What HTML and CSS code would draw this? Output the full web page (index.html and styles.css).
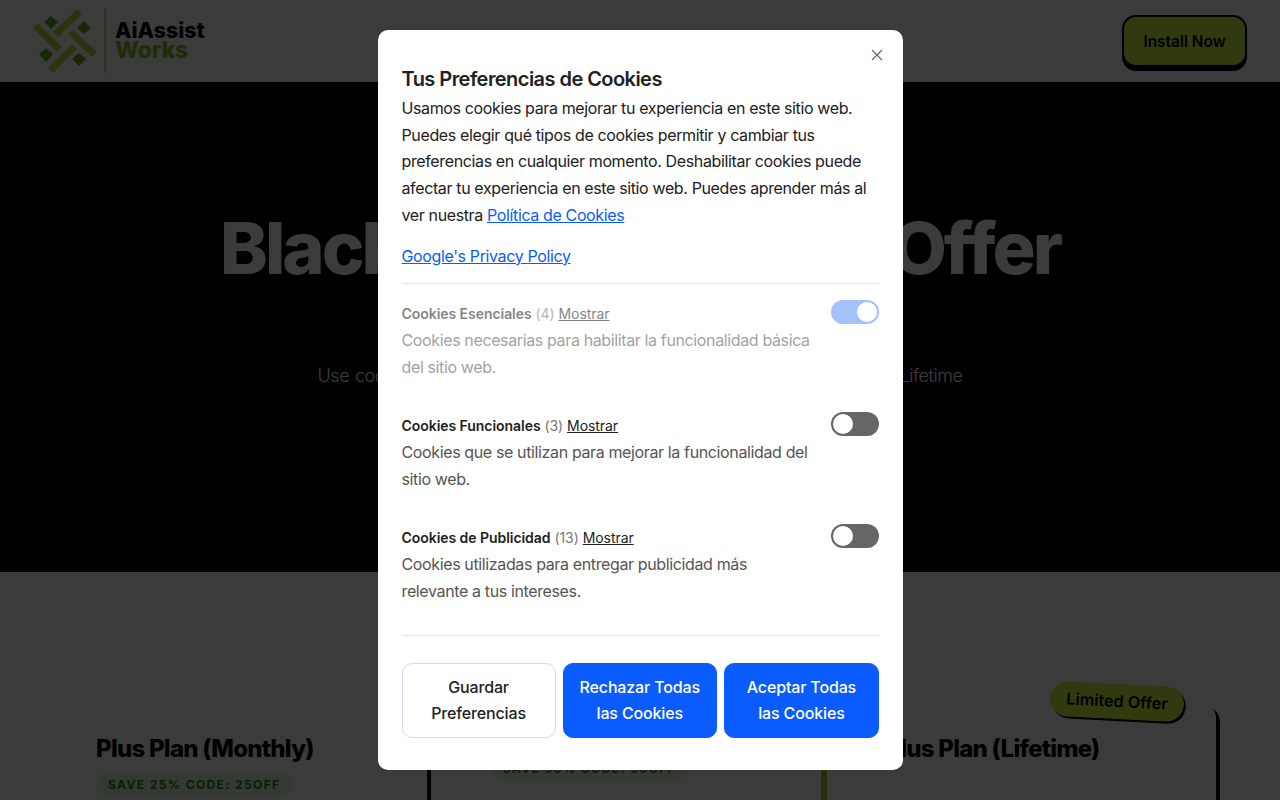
FILE: index.html
```html
<!DOCTYPE html>
<html lang="en">
<head>
  <meta charset="UTF-8">
  <meta name="viewport" content="width=device-width, initial-scale=1.0">
  <title>AiAssist Works</title>
  <link rel="stylesheet" href="styles.css">
</head>
<body>
  <!-- Page behind the cookie dialog -->
  <header class="nav">
    <a class="logo" href="#">
      <svg class="logo-mark" viewBox="32 8 75 66" aria-hidden="true">
        <g class="logo-bars">
          <polygon points="77,9 82,14 58,37 53,32"/>
          <polygon points="38,23 33,28 57,52 62,47"/>
          <polygon points="73,30 68,34 92,57 97,52"/>
          <polygon points="72,44 77,49 53,73 48,68"/>
        </g>
        <g class="logo-squares">
          <polygon points="51,16 58,22 51,29 44,22"/>
          <polygon points="84,21 91,28 84,34 77,28"/>
          <polygon points="46,48 53,54 46,62 39,54"/>
          <polygon points="79,53 86,59 79,66 72,59"/>
        </g>
        <rect class="logo-rule" x="104.5" y="9" width="1.5" height="64"/>
      </svg>
      <span class="logo-text">AiAssist<br><em>Works</em></span>
    </a>
    <a class="install" href="#">Install Now</a>
  </header>

  <section class="hero">
    <h1>Black Friday Lifetime Offer</h1>
    <p>Use code 25OFF for Plus Monthly or use code 50OFF for the Plus Plan Lifetime</p>
  </section>

  <section class="pricing">
    <div class="card">
      <h3>Plus Plan (Monthly)</h3>
      <span class="save">SAVE 25% CODE: 25OFF</span>
    </div>
    <div class="card card-featured">
      <h3>Plus Plan (Yearly)</h3>
      <span class="save">SAVE 50% CODE: 50OFF</span>
    </div>
    <div class="card">
      <span class="ribbon">Limited Offer</span>
      <h3>Plus Plan (Lifetime)</h3>
    </div>
  </section>

  <!-- Cookie preferences dialog -->
  <div class="overlay">
    <div class="modal">
      <button class="close" aria-label="Cerrar">
        <svg viewBox="0 0 12 12" width="12" height="12"><path d="M1 1l10 10M11 1L1 11"/></svg>
      </button>
      <h2>Tus Preferencias de Cookies</h2>
      <p class="intro">Usamos cookies para mejorar tu experiencia en este sitio web. Puedes elegir qué tipos de cookies permitir y cambiar tus preferencias en cualquier momento. Deshabilitar cookies puede afectar tu experiencia en este sitio web. Puedes aprender más al ver nuestra <a href="#">Política de Cookies</a></p>
      <p class="privacy"><a href="#">Google's Privacy Policy</a></p>

      <div class="categories">
        <div class="category is-disabled">
          <div class="category-text">
            <div class="category-title"><b>Cookies Esenciales</b> <span>(4)</span> <a href="#">Mostrar</a></div>
            <p>Cookies necesarias para habilitar la funcionalidad básica del sitio web.</p>
          </div>
          <div class="toggle is-on"></div>
        </div>
        <div class="category">
          <div class="category-text">
            <div class="category-title"><b>Cookies Funcionales</b> <span>(3)</span> <a href="#">Mostrar</a></div>
            <p>Cookies que se utilizan para mejorar la funcionalidad del sitio web.</p>
          </div>
          <div class="toggle"></div>
        </div>
        <div class="category">
          <div class="category-text">
            <div class="category-title"><b>Cookies de Publicidad</b> <span>(13)</span> <a href="#">Mostrar</a></div>
            <p>Cookies utilizadas para entregar publicidad más relevante a tus intereses.</p>
          </div>
          <div class="toggle"></div>
        </div>
      </div>

      <div class="actions">
        <button class="btn btn-outline">Guardar Preferencias</button>
        <button class="btn btn-primary">Rechazar Todas las Cookies</button>
        <button class="btn btn-primary">Aceptar Todas las Cookies</button>
      </div>
    </div>
  </div>
</body>
</html>
```

FILE: styles.css
```css
/* Reset */
html, body {
  margin: 0;
  padding: 0;
  height: 100%;
  overflow: hidden;
  font-family: Inter, "Liberation Sans", sans-serif;
  background: #fff;
  color: #000;
}
a { color: inherit; }

/* Top bar */
.nav {
  height: 82px;
  box-sizing: border-box;
  display: flex;
  align-items: center;
  justify-content: space-between;
  padding: 0 33px 0 32px;
}
.logo {
  display: flex;
  align-items: center;
  text-decoration: none;
}
.logo-mark { width: 75px; height: 66px; display: block; }
.logo-bars { fill: #c4dc44; }
.logo-squares { fill: #6aa818; }
.logo-rule { fill: #a5d020; }
.logo-text {
  margin: 0 0 2px 8px;
  font-size: 21.4px;
  line-height: 20px;
  font-weight: 800;
  color: #000;
}
.logo-text em { font-style: normal; font-size: 22.6px; color: #85c414; }
.install {
  display: block;
  box-sizing: border-box;
  width: 125px;
  height: 52px;
  line-height: 50px;
  text-align: center;
  font-size: 15.4px;
  font-weight: 600;
  text-decoration: none;
  color: #000;
  background: #d2fa41;
  border: 2px solid #000;
  border-radius: 14px;
  box-shadow: 0 4px 0 #000;
}

/* Hero */
.hero {
  height: 490px;
  box-sizing: border-box;
  padding-top: 122px;
  background: #000;
  color: #fff;
  text-align: center;
}
.hero h1 {
  margin: 0;
  font-size: 72px;
  line-height: 88px;
  font-weight: 800;
  letter-spacing: -3px;
  word-spacing: -6.7px;
}
.hero p {
  margin: 70px 0 0;
  font-size: 18px;
  line-height: 28px;
  font-weight: 300;
  letter-spacing: -0.4px;
  word-spacing: 1px;
}

/* Pricing cards */
.pricing {
  display: grid;
  grid-template-columns: repeat(3, 1fr);
  gap: 32px;
  padding: 130px 64px 0;
}
.card {
  position: relative;
  height: 400px;
  padding: 37px 32px 32px;
  box-sizing: border-box;
  background: #fff;
  border-radius: 16px;
  box-shadow: 4px 4px 0 #000;
}
.card-featured {
  margin-top: -16px;
  box-shadow: 6px 6px 0 #a5d020;
}
.card h3 {
  margin: 0 0 14px;
  font-size: 24px;
  line-height: 20px;
  font-weight: 800;
  letter-spacing: -0.75px;
}
.save {
  display: inline-block;
  padding: 0 12px;
  font-size: 12px;
  line-height: 23px;
  font-weight: 700;
  letter-spacing: 1.4px;
  color: #2f7d2a;
  background: #e4f7dc;
  border-radius: 12px;
}
.ribbon {
  position: absolute;
  top: -18px;
  right: 32px;
  width: 134px;
  line-height: 35px;
  text-align: center;
  font-size: 16.2px;
  font-weight: 600;
  background: #d2fa41;
  border-radius: 18px;
  box-shadow: 2px 2px 0 #000;
  transform: rotate(3deg);
}

/* Cookie dialog */
.overlay {
  position: fixed;
  top: 0; left: 0; right: 0; bottom: 0;
  display: flex;
  align-items: center;
  justify-content: center;
  background: rgba(0,0,0,0.77);
}
.modal {
  position: relative;
  width: 525px;
  height: 740px;
  box-sizing: border-box;
  padding: 37px 23.5px 32px 24px;
  background: #fff;
  border-radius: 10px;
  color: #212121;
  font-size: 16px;
  line-height: 26.7px;
  letter-spacing: -0.37px;
}
.close {
  position: absolute;
  top: 19px;
  right: 20px;
  padding: 0;
  border: 0;
  background: none;
  line-height: 0;
}
.close svg { fill: none; stroke: #666; stroke-width: 1.1; }
.modal h2 {
  margin: 0 0 4px;
  font-size: 20px;
  line-height: 24px;
  font-weight: 600;
  letter-spacing: -0.55px;
}
.intro { margin: 0; }
.privacy { margin: 14px 0 0; }
.intro a, .privacy a { color: #0a5cff; }

.categories {
  margin-top: 14px;
  padding: 16px 0 30px;
  border-top: 1px solid #e5e5e5;
  border-bottom: 1px solid #e5e5e5;
  display: flex;
  flex-direction: column;
  gap: 31px;
}
.category {
  display: flex;
  justify-content: space-between;
  align-items: flex-start;
}
.category-text { width: 412px; }
.category-text p { margin: 0; color: #555; line-height: 27px; }
.category-title { font-size: 14px; line-height: 27px; letter-spacing: -0.05px; }
.category-title b { font-weight: 600; }
.category-title span { color: #777; }
.category.is-disabled .category-text { opacity: 0.55; }

.toggle {
  position: relative;
  width: 48px;
  height: 24px;
  border-radius: 12px;
  background: #666;
}
.toggle::after {
  content: "";
  position: absolute;
  top: 2px;
  left: 2px;
  width: 20px;
  height: 20px;
  border-radius: 50%;
  background: #fff;
}
.toggle.is-on { background: #a3c1fb; }
.toggle.is-on::after { left: 26px; }

.actions {
  display: grid;
  grid-template-columns: 154fr 154fr 155fr;
  gap: 7px;
  margin-top: 27px;
}
.btn {
  box-sizing: border-box;
  height: 75px;
  padding: 0 12px 2px;
  font-family: inherit;
  font-size: 16px;
  line-height: 26px;
  font-weight: 500;
  letter-spacing: -0.15px;
  border-radius: 10px;
}
.btn-outline { color: #212121; background: #fff; border: 1px solid #cfdcf5; }
.btn-primary { color: #fff; background: #0a5cff; border: 1px solid #0a5cff; }
```
